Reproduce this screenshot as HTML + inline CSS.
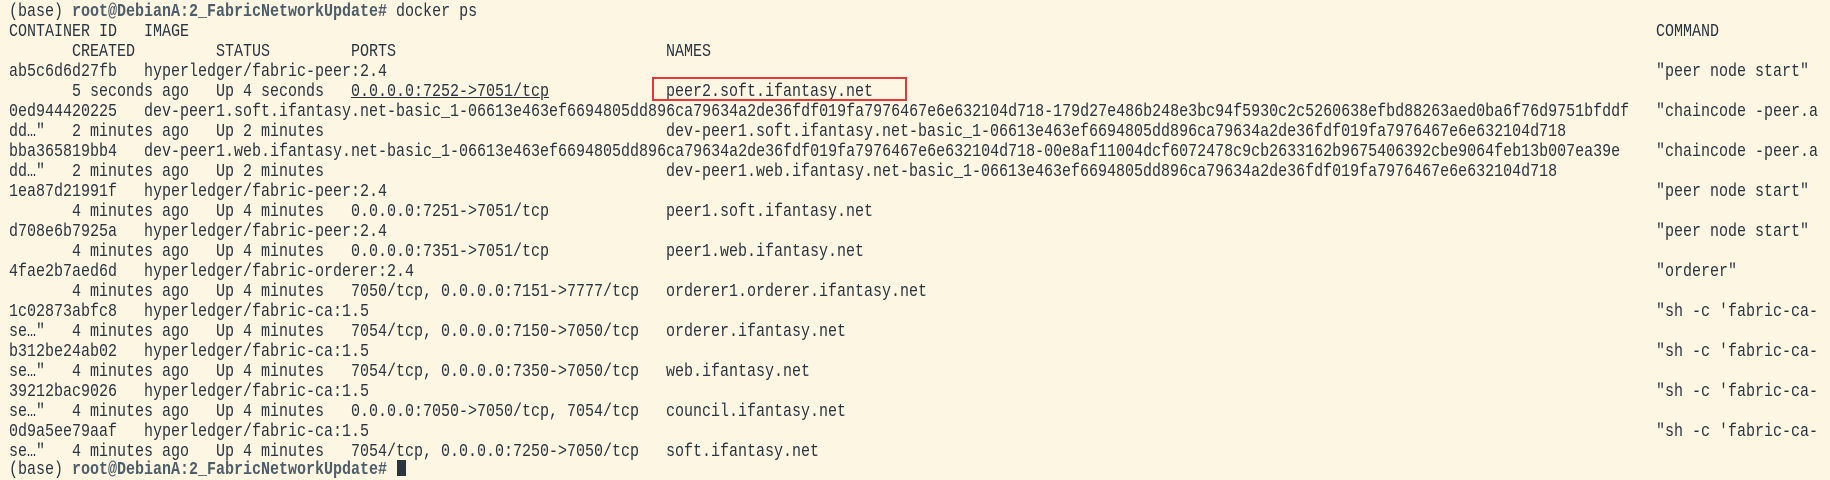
<!DOCTYPE html>
<html><head><meta charset="utf-8"><style>
html,body{margin:0;padding:0;}
body{width:1830px;height:466px;overflow:hidden;background:#fdf6e3;position:relative;font-family:"Liberation Mono",monospace;font-size:18px;color:#2a3540;}
.r{position:absolute;left:0;height:20px;width:1830px;}
.c{position:absolute;top:0;line-height:20px;white-space:pre;transform:scaleX(.8333);transform-origin:0 0;}
b{color:#4d5d6a;}
u{text-decoration:underline;}
.box{position:absolute;left:652px;top:77px;width:251px;height:20px;border:2px solid #e8373a;}
.cur{position:absolute;left:397px;top:460px;width:9px;height:16px;background:#2a3540;}
</style></head><body>
<div class="r" style="top:2px"><span class="c" style="left:9px">(base) <b>root@DebianA:2_FabricNetworkUpdate#</b> docker ps</span></div>
<div class="r" style="top:22px"><span class="c" style="left:9px">CONTAINER ID</span><span class="c" style="left:144px">IMAGE</span><span class="c" style="left:1656px">COMMAND</span></div>
<div class="r" style="top:42px"><span class="c" style="left:72px">CREATED</span><span class="c" style="left:216px">STATUS</span><span class="c" style="left:351px">PORTS</span><span class="c" style="left:666px">NAMES</span></div>
<div class="r" style="top:62px"><span class="c" style="left:9px">ab5c6d6d27fb</span><span class="c" style="left:144px">hyperledger/fabric-peer:2.4</span><span class="c" style="left:1656px">"peer node start"</span></div>
<div class="r" style="top:82px"><span class="c" style="left:72px">5 seconds ago</span><span class="c" style="left:216px">Up 4 seconds</span><span class="c" style="left:351px"><u>0.0.0.0:7252-&gt;7051/tcp</u></span><span class="c" style="left:666px">peer2.soft.ifantasy.net</span></div>
<div class="r" style="top:102px"><span class="c" style="left:9px">0ed944420225</span><span class="c" style="left:144px">dev-peer1.soft.ifantasy.net-basic_1-06613e463ef6694805dd896ca79634a2de36fdf019fa7976467e6e632104d718-179d27e486b248e3bc94f5930c2c5260638efbd88263aed0ba6f76d9751bfddf</span><span class="c" style="left:1656px">"chaincode -peer.a</span></div>
<div class="r" style="top:122px"><span class="c" style="left:9px">dd…"</span><span class="c" style="left:72px">2 minutes ago</span><span class="c" style="left:216px">Up 2 minutes</span><span class="c" style="left:666px">dev-peer1.soft.ifantasy.net-basic_1-06613e463ef6694805dd896ca79634a2de36fdf019fa7976467e6e632104d718</span></div>
<div class="r" style="top:142px"><span class="c" style="left:9px">bba365819bb4</span><span class="c" style="left:144px">dev-peer1.web.ifantasy.net-basic_1-06613e463ef6694805dd896ca79634a2de36fdf019fa7976467e6e632104d718-00e8af11004dcf6072478c9cb2633162b9675406392cbe9064feb13b007ea39e</span><span class="c" style="left:1656px">"chaincode -peer.a</span></div>
<div class="r" style="top:162px"><span class="c" style="left:9px">dd…"</span><span class="c" style="left:72px">2 minutes ago</span><span class="c" style="left:216px">Up 2 minutes</span><span class="c" style="left:666px">dev-peer1.web.ifantasy.net-basic_1-06613e463ef6694805dd896ca79634a2de36fdf019fa7976467e6e632104d718</span></div>
<div class="r" style="top:182px"><span class="c" style="left:9px">1ea87d21991f</span><span class="c" style="left:144px">hyperledger/fabric-peer:2.4</span><span class="c" style="left:1656px">"peer node start"</span></div>
<div class="r" style="top:202px"><span class="c" style="left:72px">4 minutes ago</span><span class="c" style="left:216px">Up 4 minutes</span><span class="c" style="left:351px">0.0.0.0:7251-&gt;7051/tcp</span><span class="c" style="left:666px">peer1.soft.ifantasy.net</span></div>
<div class="r" style="top:222px"><span class="c" style="left:9px">d708e6b7925a</span><span class="c" style="left:144px">hyperledger/fabric-peer:2.4</span><span class="c" style="left:1656px">"peer node start"</span></div>
<div class="r" style="top:242px"><span class="c" style="left:72px">4 minutes ago</span><span class="c" style="left:216px">Up 4 minutes</span><span class="c" style="left:351px">0.0.0.0:7351-&gt;7051/tcp</span><span class="c" style="left:666px">peer1.web.ifantasy.net</span></div>
<div class="r" style="top:262px"><span class="c" style="left:9px">4fae2b7aed6d</span><span class="c" style="left:144px">hyperledger/fabric-orderer:2.4</span><span class="c" style="left:1656px">"orderer"</span></div>
<div class="r" style="top:282px"><span class="c" style="left:72px">4 minutes ago</span><span class="c" style="left:216px">Up 4 minutes</span><span class="c" style="left:351px">7050/tcp, 0.0.0.0:7151-&gt;7777/tcp</span><span class="c" style="left:666px">orderer1.orderer.ifantasy.net</span></div>
<div class="r" style="top:302px"><span class="c" style="left:9px">1c02873abfc8</span><span class="c" style="left:144px">hyperledger/fabric-ca:1.5</span><span class="c" style="left:1656px">"sh -c 'fabric-ca-</span></div>
<div class="r" style="top:322px"><span class="c" style="left:9px">se…"</span><span class="c" style="left:72px">4 minutes ago</span><span class="c" style="left:216px">Up 4 minutes</span><span class="c" style="left:351px">7054/tcp, 0.0.0.0:7150-&gt;7050/tcp</span><span class="c" style="left:666px">orderer.ifantasy.net</span></div>
<div class="r" style="top:342px"><span class="c" style="left:9px">b312be24ab02</span><span class="c" style="left:144px">hyperledger/fabric-ca:1.5</span><span class="c" style="left:1656px">"sh -c 'fabric-ca-</span></div>
<div class="r" style="top:362px"><span class="c" style="left:9px">se…"</span><span class="c" style="left:72px">4 minutes ago</span><span class="c" style="left:216px">Up 4 minutes</span><span class="c" style="left:351px">7054/tcp, 0.0.0.0:7350-&gt;7050/tcp</span><span class="c" style="left:666px">web.ifantasy.net</span></div>
<div class="r" style="top:382px"><span class="c" style="left:9px">39212bac9026</span><span class="c" style="left:144px">hyperledger/fabric-ca:1.5</span><span class="c" style="left:1656px">"sh -c 'fabric-ca-</span></div>
<div class="r" style="top:402px"><span class="c" style="left:9px">se…"</span><span class="c" style="left:72px">4 minutes ago</span><span class="c" style="left:216px">Up 4 minutes</span><span class="c" style="left:351px">0.0.0.0:7050-&gt;7050/tcp, 7054/tcp</span><span class="c" style="left:666px">council.ifantasy.net</span></div>
<div class="r" style="top:422px"><span class="c" style="left:9px">0d9a5ee79aaf</span><span class="c" style="left:144px">hyperledger/fabric-ca:1.5</span><span class="c" style="left:1656px">"sh -c 'fabric-ca-</span></div>
<div class="r" style="top:442px"><span class="c" style="left:9px">se…"</span><span class="c" style="left:72px">4 minutes ago</span><span class="c" style="left:216px">Up 4 minutes</span><span class="c" style="left:351px">7054/tcp, 0.0.0.0:7250-&gt;7050/tcp</span><span class="c" style="left:666px">soft.ifantasy.net</span></div>
<div class="r" style="top:460px"><span class="c" style="left:9px">(base) <b>root@DebianA:2_FabricNetworkUpdate#</b> </span></div>
<div class="cur"></div>
<div class="box"></div>
</body></html>
